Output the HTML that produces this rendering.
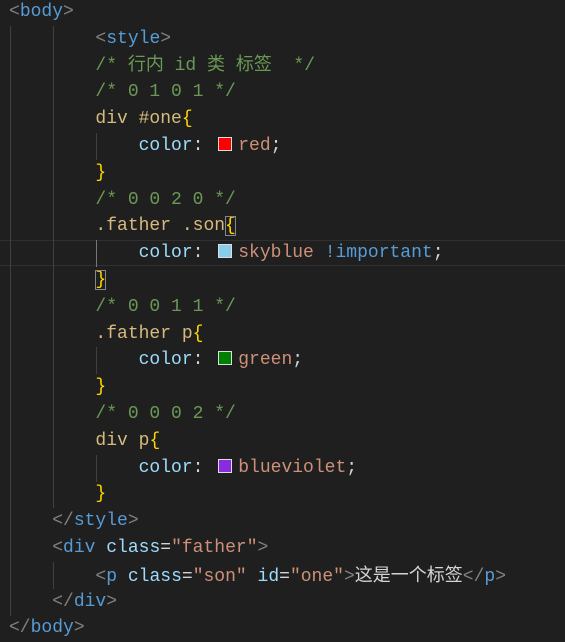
<!DOCTYPE html>
<html><head><meta charset="utf-8"><style>
html,body{margin:0;padding:0;background:#1f1f1f;width:565px;height:642px;overflow:hidden}
#c{position:relative;top:-1px;font-family:"Liberation Mono","Noto Sans CJK SC",monospace;font-size:18px;}
.l{height:26.8px;line-height:26.8px;white-space:pre;padding-left:9px;color:#d4d4d4;position:relative}
.cj{font-family:"Liberation Sans","Noto Sans CJK SC",sans-serif;}
.g{position:absolute;width:1px;background:#404040}
.t{color:#569cd6}.b{color:#808080}.cm{color:#6a9955}.s{color:#d7ba7d}.br{color:#ffd700}
.p{color:#9cdcfe}.v{color:#ce9178}
.sw{display:inline-block;width:12px;height:12px;border:1px solid #ddd;margin:0 6px 0 4px;vertical-align:-1px}
.hl{position:absolute;left:0;width:565px;top:241px;height:24px;border-top:1px solid #303030;border-bottom:1px solid #303030}
.bx{outline:1px solid #888;outline-offset:-1px}
</style></head><body>
<div id="c">
<div class="hl"></div>
<div class="g" style="left:10px;top:27px;height:590px"></div>
<div class="g" style="left:53px;top:27px;height:482px"></div>
<div class="g" style="left:96px;top:134px;height:27px"></div>
<div class="g" style="left:96px;top:241px;height:27px;background:#777"></div>
<div class="g" style="left:96px;top:348px;height:27px"></div>
<div class="g" style="left:96px;top:456px;height:27px"></div>
<div class="g" style="left:53px;top:563px;height:27px"></div>
<div class="l"><span class="b">&lt;</span><span class="t">body</span><span class="b">&gt;</span></div>
<div class="l">        <span class="b">&lt;</span><span class="t">style</span><span class="b">&gt;</span></div>
<div class="l cm">        /* 行内 id 类 标签  */</div>
<div class="l cm">        /* 0 1 0 1 */</div>
<div class="l">        <span class="s">div #one</span><span class="br">{</span></div>
<div class="l">            <span class="p">color</span>: <span class="sw" style="background:red"></span><span class="v">red</span>;</div>
<div class="l">        <span class="br">}</span></div>
<div class="l cm">        /* 0 0 2 0 */</div>
<div class="l">        <span class="s">.father .son</span><span class="br bx">{</span></div>
<div class="l">            <span class="p">color</span>: <span class="sw" style="background:skyblue"></span><span class="v">skyblue</span> <span class="t">!important</span>;</div>
<div class="l">        <span class="br bx">}</span></div>
<div class="l cm">        /* 0 0 1 1 */</div>
<div class="l">        <span class="s">.father p</span><span class="br">{</span></div>
<div class="l">            <span class="p">color</span>: <span class="sw" style="background:green"></span><span class="v">green</span>;</div>
<div class="l">        <span class="br">}</span></div>
<div class="l cm">        /* 0 0 0 2 */</div>
<div class="l">        <span class="s">div p</span><span class="br">{</span></div>
<div class="l">            <span class="p">color</span>: <span class="sw" style="background:blueviolet"></span><span class="v">blueviolet</span>;</div>
<div class="l">        <span class="br">}</span></div>
<div class="l">    <span class="b">&lt;/</span><span class="t">style</span><span class="b">&gt;</span></div>
<div class="l">    <span class="b">&lt;</span><span class="t">div</span> <span class="p">class</span>=<span class="v">"father"</span><span class="b">&gt;</span></div>
<div class="l">        <span class="b">&lt;</span><span class="t">p</span> <span class="p">class</span>=<span class="v">"son"</span> <span class="p">id</span>=<span class="v">"one"</span><span class="b">&gt;</span><span class="cj">这是一个标签</span><span class="b">&lt;/</span><span class="t">p</span><span class="b">&gt;</span></div>
<div class="l">    <span class="b">&lt;/</span><span class="t">div</span><span class="b">&gt;</span></div>
<div class="l"><span class="b">&lt;/</span><span class="t">body</span><span class="b">&gt;</span></div>
</div>
</body></html>
